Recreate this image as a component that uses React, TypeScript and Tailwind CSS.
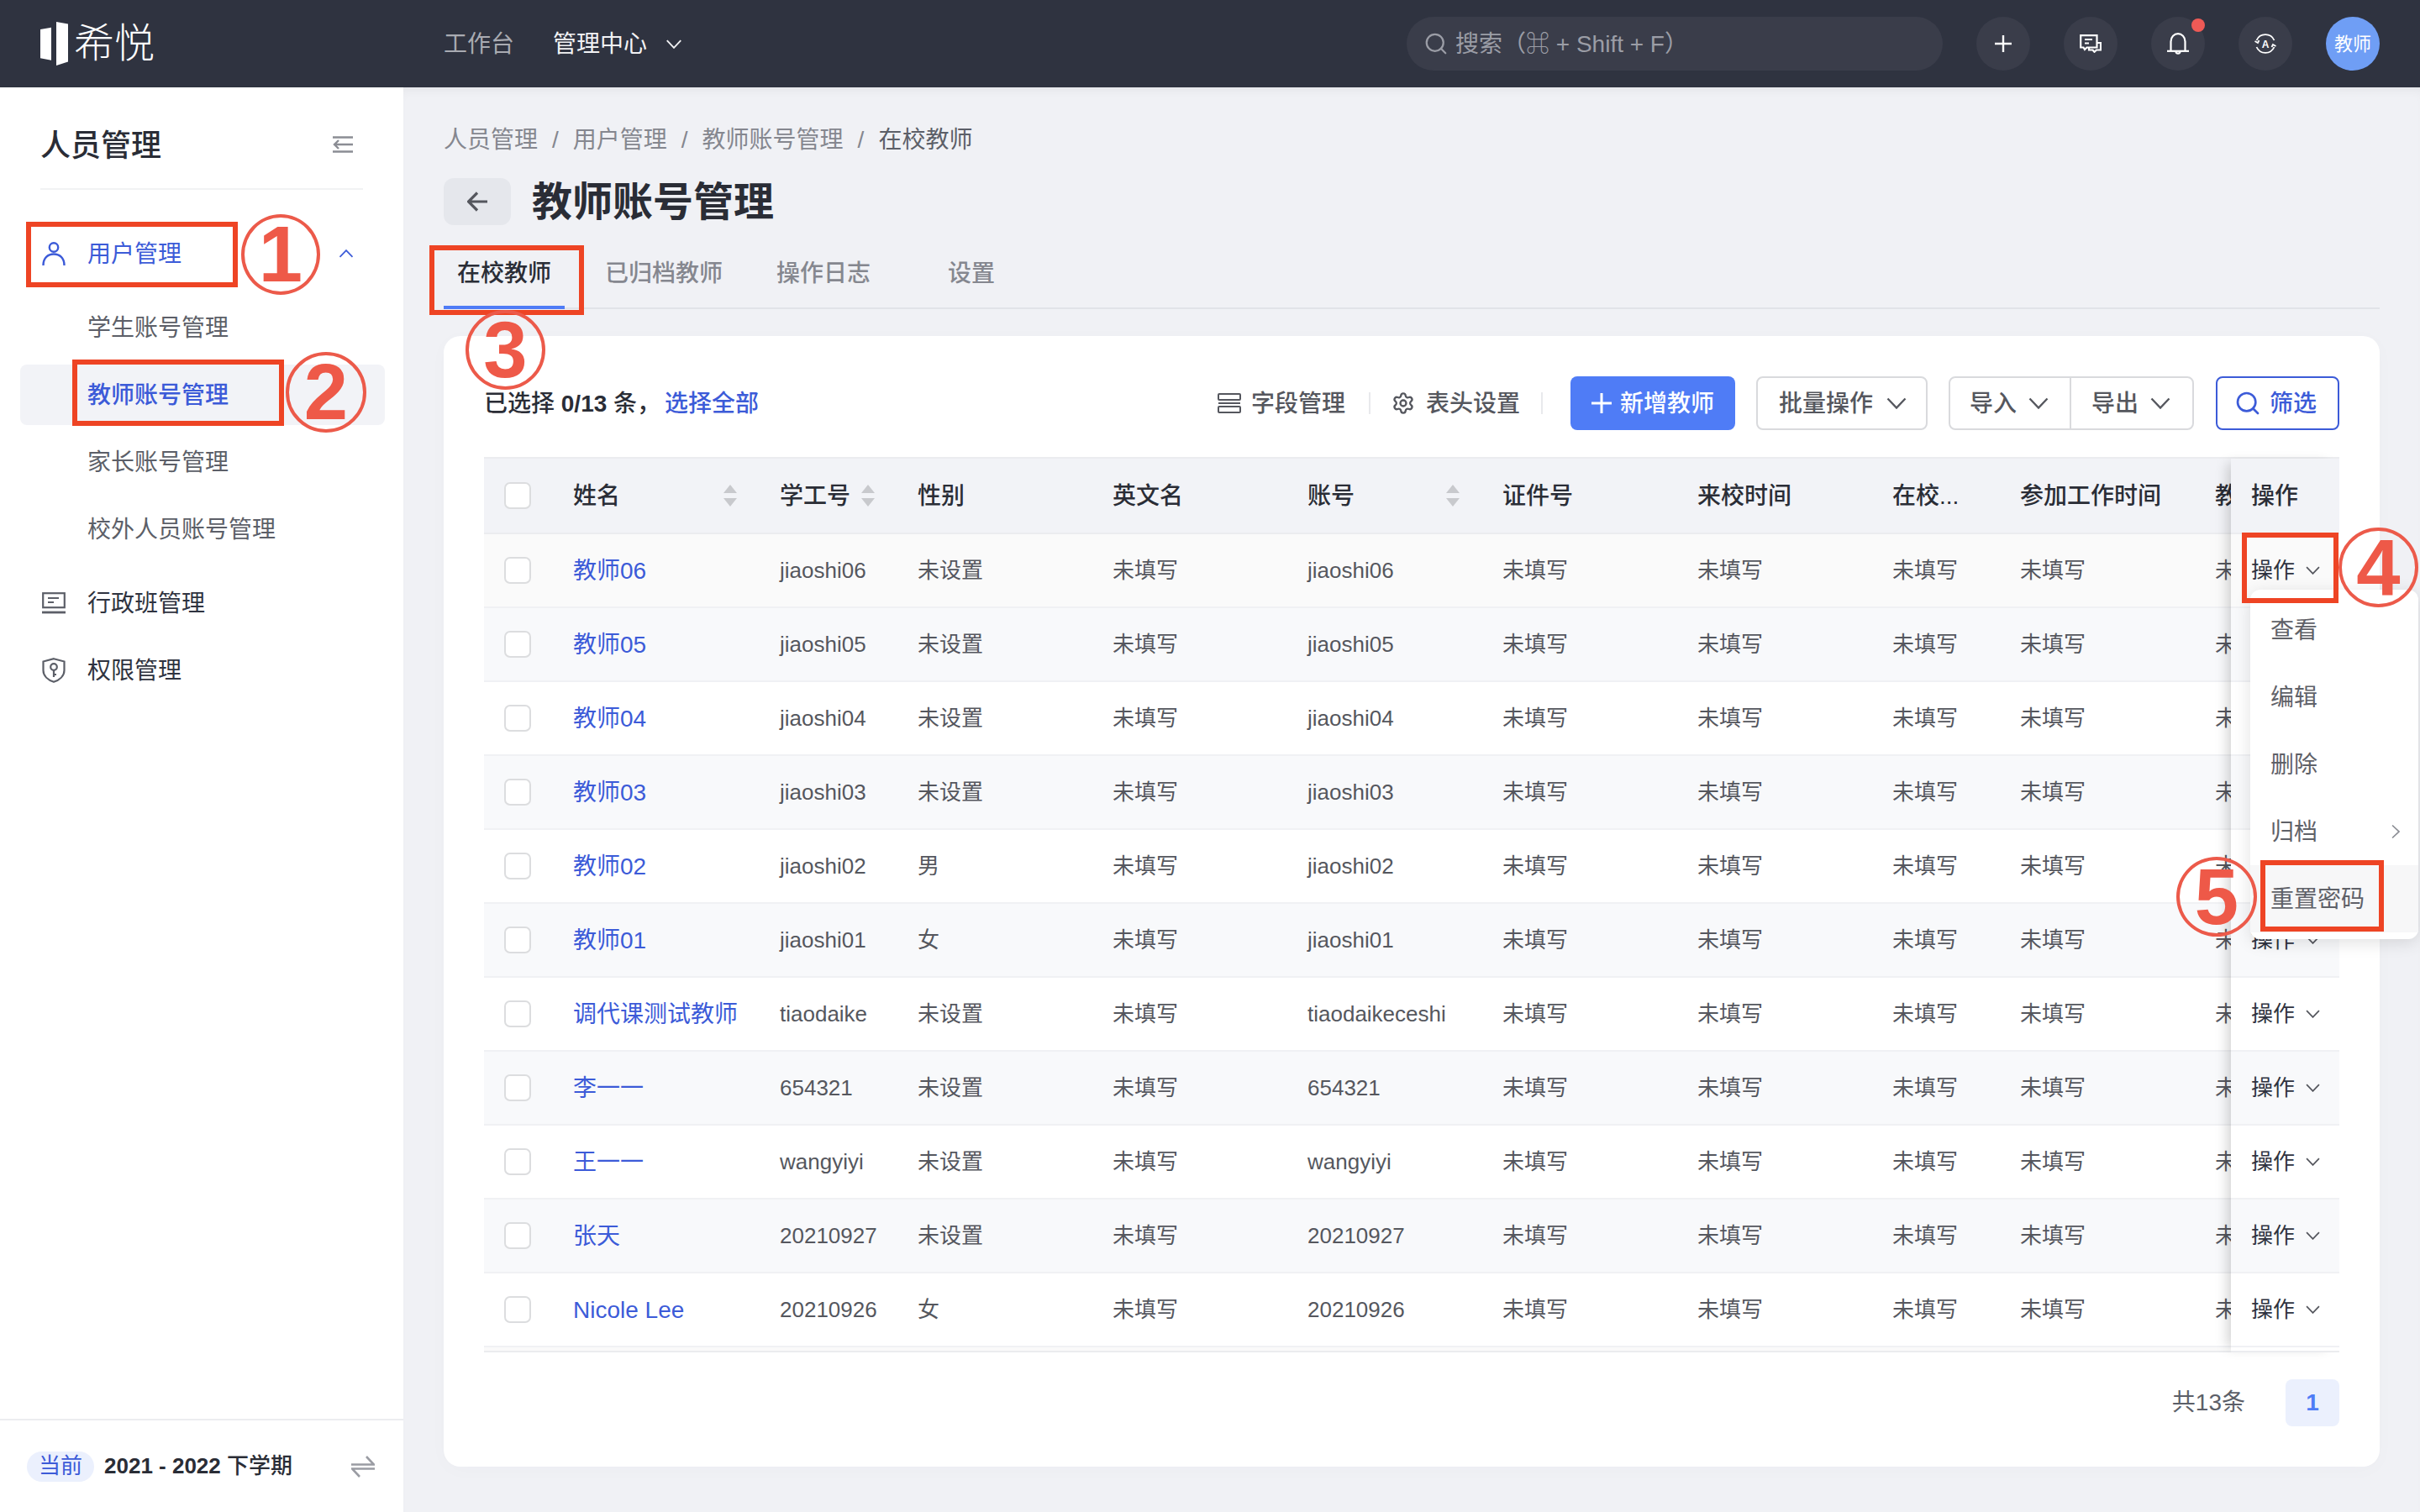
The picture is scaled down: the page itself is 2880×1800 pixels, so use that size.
import { Search, Settings } from "lucide-react";

const teachers = [
  { name: "教师06", id: "jiaoshi06", gender: "未设置", account: "jiaoshi06" },
  { name: "教师05", id: "jiaoshi05", gender: "未设置", account: "jiaoshi05" },
  { name: "教师04", id: "jiaoshi04", gender: "未设置", account: "jiaoshi04" },
  { name: "教师03", id: "jiaoshi03", gender: "未设置", account: "jiaoshi03" },
  { name: "教师02", id: "jiaoshi02", gender: "男", account: "jiaoshi02" },
  { name: "教师01", id: "jiaoshi01", gender: "女", account: "jiaoshi01" },
  { name: "调代课测试教师", id: "tiaodaike", gender: "未设置", account: "tiaodaikeceshi" },
  { name: "李一一", id: "654321", gender: "未设置", account: "654321" },
  { name: "王一一", id: "wangyiyi", gender: "未设置", account: "wangyiyi" },
  { name: "张天", id: "20210927", gender: "未设置", account: "20210927" },
  { name: "Nicole Lee", id: "20210926", gender: "女", account: "20210926" },
];

const gridCols =
  "grid grid-cols-[82px_246px_164px_232px_232px_232px_232px_232px_152px_232px_232px]";

const Chevron = ({ className }: { className: string }) => (
  <svg viewBox="0 0 24 14" fill="none" stroke="currentColor" strokeWidth="2.4" className={className}>
    <path d="M1.5 1.5 12 12.5 22.5 1.5" />
  </svg>
);

const Sort = () => (
  <svg viewBox="0 0 16 26" className="w-[16px] h-[26px] fill-[#c8c9cd]">
    <path d="M8 0 16 10H0Z" />
    <path d="M0 16H16L8 26Z" />
  </svg>
);

const Checkbox = () => (
  <span className="block w-[32px] h-[32px] rounded-[7px] border-2 border-[#dcdddf] bg-white" />
);

const Mark = ({ className, n }: { className: string; n: string }) => (
  <div
    className={`absolute z-30 flex items-center justify-center rounded-[50%] border-[4px] border-[#ec5a4a] text-[#ee5948] font-bold text-[94px] leading-none ${className}`}
  >
    {n}
  </div>
);

const Box = ({ className }: { className: string }) => (
  <div className={`absolute z-30 border-[6px] border-[#ee4424] ${className}`} />
);

const Round = ({ children }: { children: React.ReactNode }) => (
  <div className="relative w-[64px] h-[64px] rounded-full bg-[#3a3d4a] flex items-center justify-center text-white">
    {children}
  </div>
);

const TopBar = () => (
  <header className="h-[104px] bg-[#2f3340] flex items-center px-[48px]">
    <div className="w-[480px] flex items-center gap-[7px] text-white">
      <svg viewBox="0 0 33 52" className="w-[33px] h-[52px] fill-white">
        <path d="M19 0 33 2.5V47.5L19 52Z" />
        <path d="M0 9 13 6.700V45.700L0 43.300Z" />
      </svg>
      <span className="text-[48px] leading-none font-light">希悦</span>
    </div>
    <span className="pt-[2px] text-[28px] text-[#a9abb2]">工作台</span>
    <span className="pt-[2px] ml-[46px] text-[28px] text-[#f2f2f4]">管理中心</span>
    <Chevron className="ml-[22px] w-[20px] h-[11px] text-[#f2f2f4]" />
    <div className="ml-auto flex items-center gap-[40px]">
      <div className="w-[638px] h-[64px] rounded-full bg-[#3a3d4a] flex items-center pl-[20px] gap-[8px] text-[28px] text-[#9b9da6]">
        <Search className="w-[30px] h-[30px]" strokeWidth={1.8} />
        <span className="pt-[2px]">搜索（⌘ + Shift + F）</span>
      </div>
      <Round>
        <svg viewBox="0 0 20 20" className="w-[20px] h-[20px]" stroke="currentColor" strokeWidth="2.4">
          <path d="M10 0V20M0 10H20" />
        </svg>
      </Round>
      <Round>
        <svg viewBox="0 0 26 22" fill="none" stroke="currentColor" strokeWidth="2.2" className="w-[26px] h-[22px]">
          <path d="M1.200 1.200H20.500V15.500H8.500L6 18 4.500 15.500H1.200Z" />
          <path d="M6 6H15M6 10.500H11" />
          <path d="M20.500 10H25V18.500H20L17.500 20.800 15.500 18.500H11V15.500" />
        </svg>
      </Round>
      <Round>
        <svg viewBox="0 0 26 26" fill="none" stroke="currentColor" strokeWidth="2.2" className="w-[26px] h-[26px]">
          <path d="M4.500 21.500V10.500C4.500 5 8.500 1.200 13 1.200S21.500 5 21.500 10.500V21.500" />
          <path d="M0 21.800H26" />
          <path d="M10.500 22C10.500 25.500 15.500 25.500 15.500 22" />
        </svg>
        <span className="absolute top-[2px] right-0 w-[16px] h-[16px] rounded-full bg-[#ee5a56]" />
      </Round>
      <Round>
        <svg viewBox="0 0 26 26" fill="none" stroke="currentColor" strokeWidth="1.800" className="w-[26px] h-[26px]">
          <path d="M2.500 9A11.500 11.500 0 0 1 23.500 9" />
          <path d="M23.500 17A11.500 11.500 0 0 1 2.500 17" />
          <path d="M0.500 10 4 12 5.500 9M25.500 16 22 14 20.500 17" />
          <text x="13" y="17.500" fontSize="12" fontWeight="700" textAnchor="middle" fill="currentColor" stroke="none">
            A
          </text>
        </svg>
      </Round>
      <div className="w-[64px] h-[64px] rounded-full bg-[#6f9ef5] flex items-center justify-center text-[22px] text-white">
        教师
      </div>
    </div>
  </header>
);

const Sidebar = () => (
  <aside className="w-[480px] bg-white flex flex-col shrink-0">
    <div className="mx-[48px] h-[122px] pt-[45px] border-b-2 border-[#f1f2f4] flex justify-between">
      <span className="text-[36px] leading-[50px] font-medium text-[#2a2d36]">人员管理</span>
      <svg viewBox="0 0 24 20" fill="none" stroke="#8b8d94" strokeWidth="2.4" className="w-[24px] h-[20px] mt-[13px] mr-[12px]">
        <path d="M0 1.500H24M0 18.500H24M24 10H2M7 5 2 10 7 15" />
      </svg>
    </div>
    <div className="mt-[36px] h-[80px] pl-[50px] pr-[59px] flex items-center text-[28px] text-[#3c5bd8]">
      <svg viewBox="0 0 28 28" fill="none" stroke="currentColor" strokeWidth="2.4" className="w-[28px] h-[28px]">
        <circle cx="14" cy="6.500" r="5.200" />
        <path d="M1.500 28C1.500 19 7 14.500 14 14.500S26.500 19 26.500 28" />
      </svg>
      <span className="ml-[26px] pt-[2px]">用户管理</span>
      <Chevron className="ml-auto w-[18px] h-[10px] rotate-180" />
    </div>
    <div className="mt-[12px] flex flex-col gap-[8px] text-[28px] text-[#5c5f68]">
      <div className="h-[72px] pl-[104px] pt-[2px] flex items-center">学生账号管理</div>
      <div className="ml-[24px] mr-[22px] h-[72px] pl-[80px] pt-[2px] flex items-center rounded-[8px] bg-[#f2f3f7] text-[#3c5bd8] font-medium">
        教师账号管理
      </div>
      <div className="h-[72px] pl-[104px] pt-[2px] flex items-center">家长账号管理</div>
      <div className="h-[72px] pl-[104px] pt-[2px] flex items-center">校外人员账号管理</div>
    </div>
    <div className="mt-[12px] h-[80px] pl-[50px] flex items-center gap-[26px] text-[28px] text-[#2f3340]">
      <svg viewBox="0 0 28 26" fill="none" stroke="#5c5f68" strokeWidth="2.200" className="w-[28px] h-[26px]">
        <rect x="1.200" y="1.200" width="25.600" height="17" />
        <path d="M7 7H20M7 12H14" />
        <path d="M0 24H28" strokeWidth="2.800" />
      </svg>
      <span className="pt-[2px]">行政班管理</span>
    </div>
    <div className="h-[80px] pl-[50px] flex items-center gap-[26px] text-[28px] text-[#2f3340]">
      <svg viewBox="0 0 28 30" fill="none" stroke="#5c5f68" strokeWidth="2.200" className="w-[28px] h-[30px]">
        <path d="M14 1.200 26.500 4.500V15C26.500 21.500 21 26.500 14 28.800 7 26.500 1.500 21.500 1.500 15V4.500Z" />
        <circle cx="14" cy="11" r="3.800" />
        <path d="M14 15V23M14 20H17" />
      </svg>
      <span className="pt-[2px]">权限管理</span>
    </div>
    <div className="mt-auto h-[111px] border-t-2 border-[#ecedf0] pl-[32px] pr-[34px] flex items-center">
      <span className="w-[80px] h-[36px] rounded-full bg-[#ebf0fd] flex items-center justify-center text-[26px] text-[#3c5bd8]">
        当前
      </span>
      <span className="ml-[12px] text-[26px] font-medium text-[#2a2d36]">
        <span className="font-bold">2021 - 2022</span> 下学期
      </span>
      <svg viewBox="0 0 28 26" fill="none" stroke="#9a9ca3" strokeWidth="2.600" className="ml-auto w-[28px] h-[26px]">
        <path d="M0 10.500H27L18 1M28 15.500H1L10 25" />
      </svg>
    </div>
  </aside>
);

const Toolbar = () => (
  <div className="h-[64px] flex items-center justify-between text-[28px]">
    <div className="pt-[2px] font-medium text-[#2a2d36]">
      已选择 <span className="font-bold">0/13</span> 条，<span className="ml-[5px] text-[#3c5bd8]">选择全部</span>
    </div>
    <div className="flex items-center font-medium text-[#55575e]">
      <svg viewBox="0 0 28 24" fill="none" stroke="currentColor" strokeWidth="2" className="w-[28px] h-[24px]">
        <rect x="1" y="1" width="26" height="7" rx="1" />
        <path d="M1 12H27" />
        <rect x="1" y="16" width="26" height="7" rx="1" />
      </svg>
      <span className="ml-[12px] pt-[2px]">字段管理</span>
      <span className="ml-[28px] w-[2px] h-[26px] bg-[#e8e9ec]" />
      <Settings className="ml-[25px] w-[28px] h-[28px]" strokeWidth={2} />
      <span className="ml-[13px] pt-[2px]">表头设置</span>
      <span className="ml-[25px] w-[2px] h-[26px] bg-[#e8e9ec]" />
      <button className="ml-[33px] w-[196px] h-[64px] rounded-[8px] bg-[#4f7cf6] text-white flex items-center justify-center gap-[10px]">
        <svg viewBox="0 0 24 24" stroke="currentColor" strokeWidth="3" className="w-[24px] h-[24px]">
          <path d="M12 0V24M0 12H24" />
        </svg>
        <span className="pt-[2px]">新增教师</span>
      </button>
      <button className="ml-[25px] w-[204px] h-[64px] rounded-[8px] border-2 border-[#d9dadd] pl-[25px] flex items-center gap-[16px]">
        <span className="pt-[2px]">批量操作</span>
        <Chevron className="w-[24px] h-[14px]" />
      </button>
      <div className="ml-[25px] w-[292px] h-[64px] rounded-[8px] border-2 border-[#d9dadd] flex">
        <button className="w-[144px] pl-[23px] flex items-center gap-[14px] border-r-2 border-[#d9dadd]">
          <span className="pt-[2px]">导入</span>
          <Chevron className="w-[24px] h-[14px]" />
        </button>
        <button className="flex-1 pl-[24px] flex items-center gap-[14px]">
          <span className="pt-[2px]">导出</span>
          <Chevron className="w-[24px] h-[14px]" />
        </button>
      </div>
      <button className="ml-[26px] w-[147px] h-[64px] rounded-[8px] border-2 border-[#3c5bd8] text-[#3c5bd8] pl-[20px] flex items-center gap-[10px]">
        <Search className="w-[32px] h-[32px]" strokeWidth={2} />
        <span className="pt-[2px]">筛选</span>
      </button>
    </div>
  </div>
);

const HeadCell = ({ label, sort }: { label: string; sort?: boolean }) => (
  <div className="pl-[24px] pr-[27px] flex items-center justify-between whitespace-nowrap">
    <span className="pt-[2px]">{label}</span>
    {sort && <Sort />}
  </div>
);

const Cell = ({ children }: { children: React.ReactNode }) => (
  <div className="pl-[24px] flex items-center whitespace-nowrap">{children}</div>
);

const rowBg = (i: number) => (i === 0 ? "bg-[#fafafa]" : i % 2 === 1 ? "bg-[#f8f9fb]" : "bg-white");

const Table = () => (
  <div className="mt-[32px] border-t-2 border-[#ebecef] flex">
    <div className="w-[2079px] overflow-hidden">
      <div className={`${gridCols} h-[90px] bg-[#f2f3f7] border-b-2 border-[#ebecef] text-[28px] font-medium text-[#2a2d36]`}>
        <div className="pl-[24px] flex items-center">
          <Checkbox />
        </div>
        <HeadCell label="姓名" sort />
        <HeadCell label="学工号" sort />
        <HeadCell label="性别" />
        <HeadCell label="英文名" />
        <HeadCell label="账号" sort />
        <HeadCell label="证件号" />
        <HeadCell label="来校时间" />
        <HeadCell label="在校..." />
        <HeadCell label="参加工作时间" />
        <HeadCell label="教师类型" />
      </div>
      {teachers.map((t, i) => (
        <div
          key={t.name}
          className={`${gridCols} h-[88px] border-b-2 border-[#f0f1f4] text-[26px] text-[#55575e] ${rowBg(i)}`}
        >
          <div className="pl-[24px] flex items-center">
            <Checkbox />
          </div>
          <Cell>
            <span className="pt-[2px] text-[28px] text-[#3c5bd8]">{t.name}</span>
          </Cell>
          <Cell>{t.id}</Cell>
          <Cell>{t.gender}</Cell>
          <Cell>未填写</Cell>
          <Cell>{t.account}</Cell>
          <Cell>未填写</Cell>
          <Cell>未填写</Cell>
          <Cell>未填写</Cell>
          <Cell>未填写</Cell>
          <Cell>未填写</Cell>
        </div>
      ))}
      <div className="h-[6px] bg-[#fafafa] border-b-2 border-[#ebecef]" />
    </div>
    <div className="relative z-10 flex-1 shadow-[-10px_0_14px_-6px_rgba(0,0,0,0.18)]">
      <div className="h-[90px] pl-[24px] bg-[#f2f3f7] border-b-2 border-[#ebecef] flex items-center text-[28px] font-medium text-[#2a2d36]">
        <span className="pt-[2px]">操作</span>
      </div>
      {teachers.map((t, i) => (
        <div
          key={t.name}
          className={`h-[88px] pl-[24px] border-b-2 border-[#f0f1f4] flex items-center gap-[13px] text-[26px] text-[#2f3340] ${rowBg(i)}`}
        >
          操作
          <Chevron className="w-[17px] h-[10px] text-[#55575e]" />
        </div>
      ))}
      <div className="h-[6px] bg-white border-b-2 border-[#ebecef]" />
    </div>
  </div>
);

const menuItems = ["查看", "编辑", "删除", "归档"];

const Menu = () => (
  <div className="absolute z-20 left-[2678px] top-[702px] w-[200px] py-[8px] rounded-[12px] bg-white shadow-[0_4px_20px_rgba(0,0,0,0.12)] text-[28px] text-[#5f6168]">
    {menuItems.map((m) => (
      <div key={m} className="h-[80px] pl-[24px] pr-[18px] flex items-center justify-between">
        <span className="pt-[2px]">{m}</span>
        {m === "归档" && <Chevron className="w-[18px] h-[10px] -rotate-90 text-[#8b8d94]" />}
      </div>
    ))}
    <div className="h-[80px] pl-[24px] flex items-center bg-[#f7f7f8]">
      <span className="pt-[2px]">重置密码</span>
    </div>
  </div>
);

const App = () => (
  <div className="relative w-[2880px] h-[1800px] overflow-hidden flex flex-col bg-[#f0f1f5] font-['Liberation_Sans','Noto_Sans_CJK_SC','DejaVu_Sans',sans-serif]">
    <TopBar />
    <div className="flex-1 flex min-h-0">
      <Sidebar />
      <main className="flex-1 px-[48px] pt-[42px] shadow-[inset_0_10px_14px_-8px_rgba(0,0,0,0.06)]">
        <div className="h-[40px] pt-[2px] flex items-center gap-[17px] text-[28px] text-[#85878f]">
          <span>人员管理</span>
          <span>/</span>
          <span>用户管理</span>
          <span>/</span>
          <span>教师账号管理</span>
          <span>/</span>
          <span className="text-[#5c5f68]">在校教师</span>
        </div>
        <div className="mt-[26px] h-[56px] flex items-center gap-[25px]">
          <div className="w-[80px] h-[56px] rounded-[12px] bg-[#e5e7ec] flex items-center justify-center">
            <svg viewBox="0 0 24 24" fill="none" stroke="#55575e" strokeWidth="3.200" className="w-[24px] h-[24px]">
              <path d="M24 12H2M12 1.500 1.500 12 12 22.500" />
            </svg>
          </div>
          <h1 className="pt-[2px] text-[48px] font-bold text-[#2a2d36]">教师账号管理</h1>
        </div>
        <div className="h-[100px] flex gap-[32px] text-[28px] shadow-[inset_0_-2px_0_#e1e3e8]">
          <div className="w-[144px] pt-[38px] text-center border-b-4 border-[#4f7cf6] font-medium text-[#2a2d36] leading-[40px]">
            在校教师
          </div>
          <div className="min-w-[144px] px-[16px] pt-[38px] text-center leading-[40px] text-[#85878f] font-medium">
            已归档教师
          </div>
          <div className="min-w-[144px] px-[16px] pt-[38px] text-center leading-[40px] text-[#85878f] font-medium">
            操作日志
          </div>
          <div className="min-w-[144px] px-[16px] pt-[38px] text-center leading-[40px] text-[#85878f] font-medium">
            设置
          </div>
        </div>
        <section className="mt-[32px] h-[1346px] rounded-[20px] bg-white px-[48px] pt-[48px] shadow-[0_4px_24px_rgba(30,40,80,0.02)]">
          <Toolbar />
          <Table />
          <div className="mt-[32px] flex items-center justify-end gap-[48px] text-[28px]">
            <span className="text-[#5c5f68]">共13条</span>
            <span className="w-[64px] h-[56px] rounded-[8px] bg-[#ebf0fd] flex items-center justify-center font-bold text-[#4f7cf6]">
              1
            </span>
          </div>
        </section>
      </main>
    </div>
    <Menu />
    <Box className="left-[31px] top-[264px] w-[252px] h-[78px]" />
    <Mark n="1" className="left-[287px] top-[255px] w-[94px] h-[96px]" />
    <Box className="left-[86px] top-[428px] w-[252px] h-[79px]" />
    <Mark n="2" className="left-[340px] top-[419px] w-[96px] h-[96px]" />
    <Box className="left-[511px] top-[292px] w-[184px] h-[83px]" />
    <Mark n="3" className="left-[554px] top-[369px] w-[95px] h-[95px]" />
    <Box className="left-[2668px] top-[634px] w-[115px] h-[84px]" />
    <Mark n="4" className="left-[2783px] top-[628px] w-[95px] h-[95px]" />
    <Box className="left-[2690px] top-[1024px] w-[147px] h-[85px]" />
    <Mark n="5" className="left-[2590px] top-[1020px] w-[96px] h-[95px]" />
  </div>
);

export default App;
